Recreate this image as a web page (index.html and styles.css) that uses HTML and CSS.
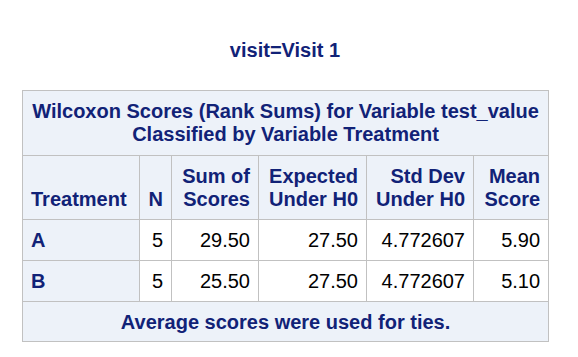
FILE: index.html
```html
<!DOCTYPE html>
<html>
<head>
<meta charset="utf-8">
<link rel="stylesheet" href="styles.css">
</head>
<body>
<div class="wrap">
  <div class="title">visit=Visit 1</div>
  <table class="stats">
    <colgroup>
      <col class="c1"><col class="c2"><col class="c3"><col class="c4"><col class="c5"><col class="c6">
    </colgroup>
    <thead>
      <tr><th colspan="6" class="caption top">Wilcoxon Scores (Rank Sums) for Variable test_value<br>Classified by Variable Treatment</th></tr>
      <tr class="heads">
        <th class="left">Treatment</th>
        <th>N</th>
        <th>Sum of<br>Scores</th>
        <th>Expected<br>Under H0</th>
        <th>Std Dev<br>Under H0</th>
        <th>Mean<br>Score</th>
      </tr>
    </thead>
    <tbody>
      <tr><th class="left rowh">A</th><td>5</td><td>29.50</td><td>27.50</td><td>4.772607</td><td>5.90</td></tr>
      <tr><th class="left rowh">B</th><td>5</td><td>25.50</td><td>27.50</td><td>4.772607</td><td>5.10</td></tr>
    </tbody>
    <tfoot>
      <tr><th colspan="6" class="caption foot">Average scores were used for ties.</th></tr>
    </tfoot>
  </table>
</div>
</body>
</html>
```
FILE: styles.css
```css
html, body {
  margin: 0;
  padding: 0;
  background: #ffffff;
}
body {
  font-family: "Liberation Sans", Arial, sans-serif;
  font-size: 20px;
  line-height: 23px;
}
.wrap {
  width: 526px;
  margin-left: 22px;
  padding-top: 39px;
}
.title {
  text-align: center;
  font-weight: bold;
  color: #112277;
  margin-bottom: 28px;
}
.stats {
  border-collapse: collapse;
  width: 526px;
  table-layout: fixed;
  border: 1px solid #c1c1c1;
}
.c1 { width: 117px; }
.c2 { width: 32px; }
.c3 { width: 87px; }
.c4 { width: 108px; }
.c5 { width: 107px; }
.c6 { width: 75px; }
.stats th, .stats td {
  border: 1px solid #c1c1c1;
  padding: 9px 8px 8px 8px;
  text-align: right;
  vertical-align: bottom;
  white-space: nowrap;
}
.stats th {
  background: #edf2f9;
  color: #112277;
  font-weight: bold;
}
.stats td {
  background: #ffffff;
  color: #000000;
  font-weight: normal;
}
.stats th.caption {
  text-align: center;
  vertical-align: middle;
}
.stats th.top {
  padding: 9px 8px 9px 8px;
}
.stats th.foot {
  padding: 9px 8px 7px 8px;
}
.stats th.left {
  text-align: left;
}
.stats tbody th, .stats tbody td {
  vertical-align: middle;
  padding: 9px 8px 8px 8px;
  height: 22px;
}
.stats .heads th {
  height: 46px;
  padding: 9px 8px 8px 8px;
}
```
